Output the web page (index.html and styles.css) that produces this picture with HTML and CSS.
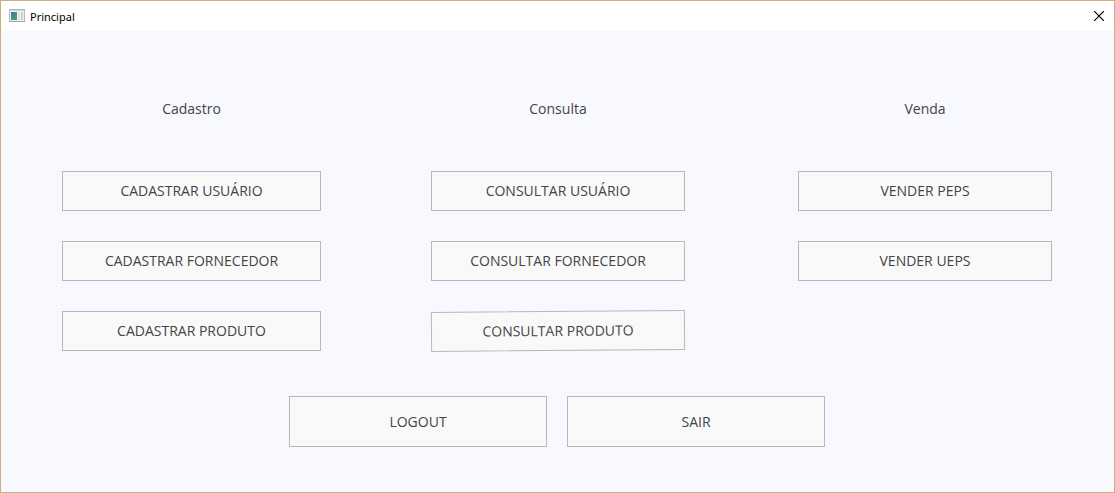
FILE: index.html
```html
<!DOCTYPE html>
<html lang="pt-BR">
<head>
<meta charset="utf-8">
<meta name="viewport" content="width=device-width, initial-scale=1">
<title>Principal</title>
<link rel="stylesheet" href="styles.css">
</head>
<body>
<div class="window">
  <header class="titlebar">
    <svg class="app-icon" width="16" height="14" viewBox="0 0 16 14" aria-hidden="true">
      <defs>
        <linearGradient id="pane" x1="0" y1="0" x2="1" y2="1">
          <stop offset="0" stop-color="#3f72a8"/>
          <stop offset="1" stop-color="#4fa36c"/>
        </linearGradient>
      </defs>
      <rect x="0.5" y="0.5" width="15" height="12" fill="#eef0f2" stroke="#b4b8bc"/>
      <rect x="1" y="1" width="14" height="1" fill="#d2d5d8"/>
      <rect x="2" y="3" width="6" height="8" fill="url(#pane)"/>
      <rect x="9" y="3" width="2" height="8" fill="#dfe3e8"/>
      <rect x="12" y="3" width="2" height="8" fill="#c9d1da"/>
      <rect x="0" y="12" width="16" height="1" fill="#a2a6aa"/>
    </svg>
    <h1 class="title">Principal</h1>
    <button class="close" type="button" aria-label="Fechar">
      <svg width="10" height="10" viewBox="0 0 10 10" aria-hidden="true">
        <path d="M0 0L10 10M10 0L0 10" stroke="#000" stroke-width="1.2"/>
      </svg>
    </button>
  </header>
  <main class="content">
    <div class="columns">
      <section class="column">
        <h2 class="heading">Cadastro</h2>
        <button class="button" type="button">CADASTRAR USUÁRIO</button>
        <button class="button" type="button">CADASTRAR FORNECEDOR</button>
        <button class="button" type="button">CADASTRAR PRODUTO</button>
      </section>
      <section class="column column-middle">
        <h2 class="heading">Consulta</h2>
        <button class="button" type="button">CONSULTAR USUÁRIO</button>
        <button class="button" type="button">CONSULTAR FORNECEDOR</button>
        <button class="button button-tilted" type="button">CONSULTAR PRODUTO</button>
      </section>
      <section class="column">
        <h2 class="heading">Venda</h2>
        <button class="button" type="button">VENDER PEPS</button>
        <button class="button" type="button">VENDER UEPS</button>
      </section>
    </div>
    <div class="actions">
      <button class="button button-large" type="button">LOGOUT</button>
      <button class="button button-large" type="button">SAIR</button>
    </div>
  </main>
</div>
</body>
</html>
```

FILE: styles.css
```css
* {
  box-sizing: border-box;
}

body {
  margin: 0;
  font-family: "Open Sans", "Noto Sans", sans-serif;
  color: #444;
}

.window {
  display: flex;
  flex-direction: column;
  min-height: 100vh;
  border: 1px solid #cfae7c;
  background: #f8f9ff;
}

.titlebar {
  display: flex;
  align-items: center;
  gap: 5px;
  height: 30px;
  padding: 0 8px;
  background: #fff;
}

.title {
  flex: 1;
  margin: 0;
  font-family: "Noto Sans", sans-serif;
  font-size: 11px;
  font-weight: 400;
  color: #000;
}

.close {
  display: flex;
  padding: 2px;
  border: 0;
  background: none;
}

.content {
  flex: 1;
  padding: 68px 62px 45px 61px;
}

.columns {
  display: grid;
  grid-template-columns: 259fr 257fr 254fr;
  column-gap: 110px;
}

.column {
  display: flex;
  flex-direction: column;
  gap: 30px;
}

.column-middle {
  padding-right: 3px;
}

.heading {
  margin: 0 0 22px;
  font-size: 14px;
  font-weight: 400;
  line-height: 20px;
  text-align: center;
}

.button {
  height: 40px;
  padding: 0 8px;
  border: 1px solid #b8b8b8;
  background: #f9f9f9;
  color: #444;
  font-family: inherit;
  font-size: 14px;
  line-height: 20px;
}

.button-tilted {
  transform: rotate(-0.4deg);
}

.actions {
  display: flex;
  justify-content: center;
  gap: 20px;
  margin-top: 45px;
}

.button-large {
  width: 258px;
  height: 51px;
}
```
